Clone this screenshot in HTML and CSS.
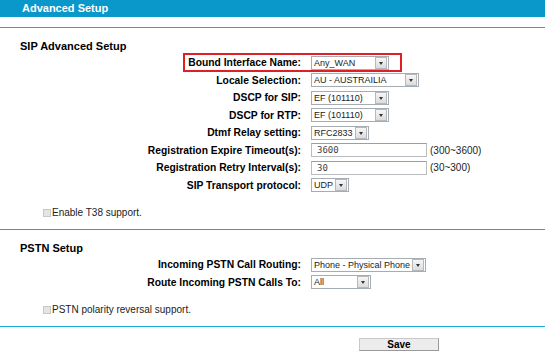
FILE: index.html
```html
<!DOCTYPE html>
<html lang="en">
<head>
  <meta charset="UTF-8">
  <title>Advanced Setup</title>
  <link rel="stylesheet" href="styles.css">
</head>
<body>
  <div class="title-bar">Advanced Setup</div>
  <div class="rule rule-top"></div>

  <h3 class="section">SIP Advanced Setup</h3>
  <div class="form">
    <div class="row highlight">
      <label>Bound Interface Name:</label>
      <span class="sel w78"><b>Any_WAN</b><i></i></span>
    </div>
    <div class="row">
      <label>Locale Selection:</label>
      <span class="sel w108"><b>AU - AUSTRAILIA</b><i></i></span>
    </div>
    <div class="row">
      <label>DSCP for SIP:</label>
      <span class="sel w78"><b>EF (101110)</b><i></i></span>
    </div>
    <div class="row">
      <label>DSCP for RTP:</label>
      <span class="sel w78"><b>EF (101110)</b><i></i></span>
    </div>
    <div class="row">
      <label>Dtmf Relay setting:</label>
      <span class="sel w57"><b>RFC2833</b><i></i></span>
    </div>
    <div class="row">
      <label>Registration Expire Timeout(s):</label>
      <span class="txt">3600</span>
      <span class="hint">(300~3600)</span>
    </div>
    <div class="row">
      <label>Registration Retry Interval(s):</label>
      <span class="txt">30</span>
      <span class="hint">(30~300)</span>
    </div>
    <div class="row">
      <label>SIP Transport protocol:</label>
      <span class="sel w37"><b>UDP</b><i></i></span>
    </div>
  </div>
  <div class="check"><span class="box"></span>Enable T38 support.</div>
  <div class="rule"></div>

  <h3 class="section">PSTN Setup</h3>
  <div class="form">
    <div class="row">
      <label>Incoming PSTN Call Routing:</label>
      <span class="sel w114"><b>Phone - Physical Phone</b><i></i></span>
    </div>
    <div class="row">
      <label>Route Incoming PSTN Calls To:</label>
      <span class="sel w59"><b>All</b><i></i></span>
    </div>
  </div>
  <div class="check"><span class="box"></span>PSTN polarity reversal support.</div>
  <div class="rule"></div>

  <div class="actions"><button>Save</button></div>
</body>
</html>
```

FILE: styles.css
```css
body {
  margin: 0;
  width: 545px;
  font-family: "Liberation Sans", Arial, sans-serif;
  font-size: 10px;
  color: #000;
  background: #fff;
}

.title-bar {
  height: 17px;
  line-height: 16px;
  background: #0a97c9;
  color: #fff;
  font-weight: bold;
  font-size: 11px;
  padding-left: 22px;
}

.rule {
  height: 1px;
  background: #1aa6d8;
}
.rule-top { margin-top: 10px; }

.section {
  margin: 11px 0 0 20px;
  font-size: 11px;
  font-weight: bold;
  line-height: 14px;
}

.form { margin-top: 1px; }

.row {
  display: flex;
  align-items: center;
  height: 17.5px;
  position: relative;
}

.row label {
  width: 311px;
  text-align: right;
  font-weight: bold;
  font-size: 10.3px;
  padding-right: 10px;
  box-sizing: border-box;
  flex: none;
  white-space: nowrap;
}

.row.highlight::before {
  content: "";
  position: absolute;
  left: 183px;
  top: -1px;
  width: 219px;
  height: 19px;
  border: 2px solid #e01e25;
  box-sizing: border-box;
}

.sel {
  display: flex;
  align-items: center;
  justify-content: space-between;
  height: 14px;
  border: 1px solid #a5acb2;
  padding: 0 1px 0 2px;
  box-sizing: border-box;
  color: #222;
  background: #fff;
  line-height: 12px;
  font-size: 9px;
}
.sel b {
  font-weight: normal;
  white-space: nowrap;
}
.sel i {
  width: 10px;
  height: 10px;
  border: 1px solid #b5b9bd;
  background: linear-gradient(#f6f6f6, #dcdcdc);
  position: relative;
  flex: none;
  margin-left: 1px;
}
.sel i::after {
  content: "";
  position: absolute;
  left: 3px;
  top: 4px;
  border-left: 2px solid transparent;
  border-right: 2px solid transparent;
  border-top: 3px solid #333;
}
.w37 { width: 38px; }
.w57 { width: 58px; }
.w59 { width: 60px; }
.w78 { width: 78px; }
.w108 { width: 108px; }
.w114 { width: 115px; }

.txt {
  width: 116px;
  height: 14px;
  border: 1px solid #b9bdc1;
  border-top-color: #9a9fa4;
  box-sizing: border-box;
  font-family: "DejaVu Sans Mono", monospace;
  font-size: 9px;
  color: #444;
  line-height: 12px;
  padding-left: 5px;
}

.hint {
  margin-left: 3px;
  color: #222;
}

.check {
  display: flex;
  align-items: center;
  margin: 12px 0 10px 43px;
  color: #222;
  line-height: 13px;
}
.check .box {
  width: 6px;
  height: 6px;
  border: 1px solid #c8c8c8;
  background: #e4e4e4;
  margin-right: 1px;
}

.actions {
  padding: 11px 0 0 359px;
}
.actions button {
  width: 80px;
  height: 13px;
  padding: 0;
  border: 1px solid #c8c8c8;
  border-right-color: #9a9a9a;
  border-bottom-color: #9a9a9a;
  background: #ececec;
  font-family: "Liberation Sans", Arial, sans-serif;
  font-weight: bold;
  font-size: 10px;
  line-height: 11px;
  color: #000;
}
```
